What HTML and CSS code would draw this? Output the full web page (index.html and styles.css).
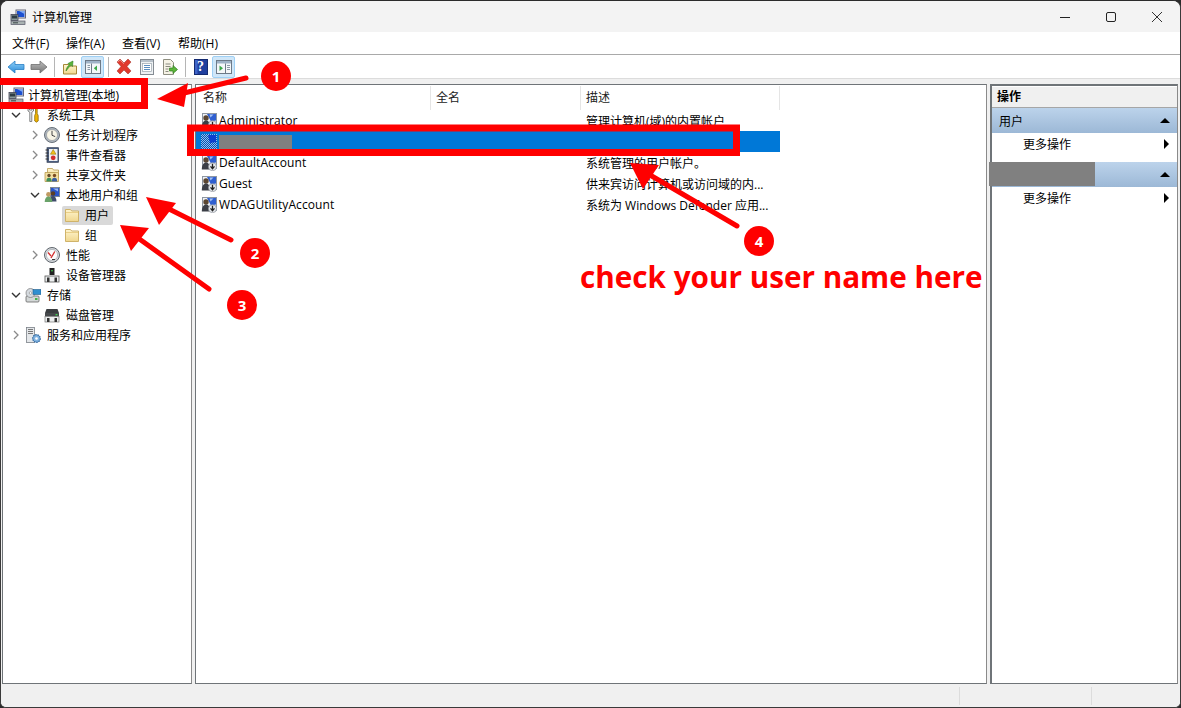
FILE: index.html
```html
<!DOCTYPE html>
<html lang="zh-CN">
<head>
<meta charset="utf-8">
<title>计算机管理</title>
<link rel="stylesheet" href="styles.css">
</head>
<body>
<svg class="defs" width="0" height="0" aria-hidden="true">
  <defs>
    <linearGradient id="gBlue" x1="0" y1="0" x2="0" y2="1"><stop offset="0" stop-color="#8fd0f8"/><stop offset="1" stop-color="#2a8ad8"/></linearGradient>
    <linearGradient id="gGray" x1="0" y1="0" x2="0" y2="1"><stop offset="0" stop-color="#bdbdbd"/><stop offset="1" stop-color="#767676"/></linearGradient>
    <linearGradient id="gFolder" x1="0" y1="0" x2="0" y2="1"><stop offset="0" stop-color="#fff5cf"/><stop offset="1" stop-color="#f0d78e"/></linearGradient>
    <symbol id="i-computer" viewBox="0 0 16 16">
      <rect x="6" y="1" width="9.500" height="8" fill="#e8eef5" stroke="#667" stroke-width="1"/>
      <rect x="7" y="2" width="7.500" height="6" fill="#1b4fd0"/>
      <path d="M9 2h5.500v3z" fill="#7fa8f0"/>
      <rect x="1" y="5.500" width="7" height="6" fill="#8a9a9a" stroke="#445" stroke-width=".8"/>
      <rect x="2" y="6.500" width="5" height="3" fill="#2e3c44"/>
      <rect x="1" y="12" width="14" height="3.500" fill="#a9b2b2" stroke="#556" stroke-width=".7"/>
      <rect x="3" y="13.300" width="5" height="1" fill="#3b4648"/>
    </symbol>
    <symbol id="i-user" viewBox="0 0 16 16">
      <rect x="1.500" y=".5" width="14" height="13" fill="#eef1f5" stroke="#8d96a2"/>
      <path d="M6 1h9v6.500L10 8.500z" fill="#2f5fd0"/>
      <path d="M8.500 1.500h4l-3 3z" fill="#a3c0f2"/>
      <circle cx="5" cy="5" r="2.700" fill="#5a4632"/>
      <path d="M.8 14.500c0-4.500 2-7 4.200-7s4 2 4 5v2z" fill="#3b3e46"/>
      <circle cx="11.500" cy="11.700" r="4" fill="#e6e9ed" stroke="#8f959c" stroke-width=".7"/>
      <path d="M11.500 8.800v4.700M9.500 11.400l2 2.300 2-2.300" fill="none" stroke="#222" stroke-width="1.300"/>
    </symbol>
    <symbol id="i-userSel" viewBox="0 0 16 16">
      <pattern id="pDots" width="2" height="2" patternUnits="userSpaceOnUse"><rect width="1" height="1" fill="#0a4fb0"/><rect x="1" y="1" width="1" height="1" fill="#0a4fb0"/><rect x="1" width="1" height="1" fill="#8cc2f0"/><rect y="1" width="1" height="1" fill="#8cc2f0"/></pattern>
      <rect x="0" y="0" width="16" height="16" fill="url(#pDots)"/>
      <path d="M7 1h8v7l-6 1z" fill="#0b3fd0"/>
    </symbol>
    <symbol id="i-folder" viewBox="0 0 16 16">
      <path d="M1.500 2.500h5l1.200 1.500h6.800v10.500h-13z" fill="url(#gFolder)" stroke="#cfb36a"/>
      <path d="M2 5.500h12" stroke="#e9cf88"/>
    </symbol>
    <symbol id="i-tools" viewBox="0 0 16 16">
      <path d="M3 .5v3.500l1.800 1.200v9.300h2V5.200L8.500 4V.5L7 .5v2.500H4.500V.5z" fill="#eceff1" stroke="#666" stroke-width=".8"/>
      <path d="M10.500 1.500h1.700v5l1 2v5.500l-1.800 1.200-1.700-1.200V8.500l.8-2z" fill="#f0b400" stroke="#7d5f00" stroke-width=".7"/>
    </symbol>
    <symbol id="i-clock" viewBox="0 0 16 16">
      <circle cx="8" cy="8" r="7.500" fill="#aeb6bf" stroke="#687078"/>
      <circle cx="8" cy="8" r="5.500" fill="#f8f5e6" stroke="#8a8f94" stroke-width=".6"/>
      <path d="M8 3.800v4.500l3.200 1.300" fill="none" stroke="#444" stroke-width="1"/>
    </symbol>
    <symbol id="i-event" viewBox="0 0 16 16">
      <rect x="3" y=".7" width="11.500" height="14.600" fill="#4c5f80" stroke="#2f3a50" stroke-width=".7"/>
      <rect x="5" y="2" width="8.500" height="12" fill="#eef1f4"/>
      <path d="M9.200 2.500l2.800 4.700H6.400z" fill="#f3c11a" stroke="#8a6a00" stroke-width=".5"/>
      <circle cx="9.200" cy="10.800" r="2.400" fill="#d32f2f"/>
      <path d="M1.500 3h3M1.500 6h3M1.500 9h3M1.500 12h3" stroke="#333"/>
    </symbol>
    <symbol id="i-share" viewBox="0 0 16 16">
      <path d="M3.500 1.500h5l1 1.500h5v8h-11z" fill="url(#gFolder)" stroke="#b89a50" stroke-width=".8"/>
      <path d="M1 5.500h13.500v9H1z" fill="#f3dfa0" stroke="#b89a50" stroke-width=".8"/>
      <circle cx="5" cy="8.500" r="1.700" fill="#6a5030"/>
      <path d="M2.300 14.500c0-2.800 1-3.800 2.700-3.800s2.700 1 2.700 3.800z" fill="#3f8f5a"/>
      <circle cx="10.500" cy="8.500" r="1.700" fill="#7a4a20"/>
      <path d="M7.800 14.500c0-2.800 1-3.800 2.700-3.800s2.700 1 2.700 3.800z" fill="#3b5fa0"/>
    </symbol>
    <symbol id="i-group" viewBox="0 0 16 16">
      <rect x="6.500" y=".5" width="9" height="9" fill="#2a55c8" stroke="#7d8794"/>
      <path d="M9 1.500h5v3z" fill="#9dbaf0"/>
      <circle cx="9" cy="6.500" r="2.300" fill="#5a3f26"/>
      <path d="M5.500 14.500c0-3.500 1.500-5.500 3.500-5.500s3.500 2 3.500 5.500z" fill="#3e4a6a"/>
      <circle cx="4.500" cy="7.500" r="2.400" fill="#c09a62"/>
      <path d="M.7 15c0-3.500 1.500-5.500 3.800-5.500S8.300 11.500 8.300 15z" fill="#6aa36a"/>
    </symbol>
    <symbol id="i-perf" viewBox="0 0 16 16">
      <circle cx="8" cy="8" r="7.500" fill="#d6dade" stroke="#5f656c"/>
      <circle cx="8" cy="8" r="5.600" fill="#fbfbfb" stroke="#9a9fa4" stroke-width=".6"/>
      <path d="M4 5.500l3 3.500M10.800 4.500L7 11" stroke="#d22c2c" stroke-width="1.300" fill="none"/>
      <path d="M8 12.500h3" stroke="#3a3a3a"/>
    </symbol>
    <symbol id="i-device" viewBox="0 0 16 16">
      <rect x="5.500" y="1" width="5" height="7" fill="#222"/>
      <rect x="7.300" y="3" width="1.400" height="1.400" fill="#3fd04c"/>
      <rect x="1" y="9" width="14" height="6" fill="#eceeef" stroke="#555" stroke-width=".8"/>
      <rect x="3" y="10.500" width="2.500" height="4.500" fill="#333"/>
      <rect x="10.500" y="10.500" width="2.500" height="4.500" fill="#333"/>
    </symbol>
    <symbol id="i-storage" viewBox="0 0 16 16">
      <rect x="1" y="9" width="13" height="6" rx="1" fill="#d4d8d8" stroke="#666" stroke-width=".8"/>
      <rect x="10" y="11" width="2.500" height="2" fill="#45b34a"/>
      <ellipse cx="5.500" cy="6" rx="4.500" ry="4.500" fill="#d6dbe0" stroke="#777" stroke-width=".7"/>
      <circle cx="5.500" cy="6" r="1.300" fill="#fff" stroke="#777" stroke-width=".5"/>
      <rect x="8" y="2.500" width="8" height="5" fill="#2f8fd0" stroke="#1e5a8a" stroke-width=".6"/>
    </symbol>
    <symbol id="i-disk" viewBox="0 0 16 16">
      <path d="M2.500 2h11l1.500 4H1z" fill="#3a3d40"/>
      <rect x="1" y="6" width="14" height="3.500" fill="#46494c"/>
      <rect x="11.500" y="7" width="2" height="1.300" fill="#40d050"/>
      <rect x="1" y="9.500" width="14" height="5.500" fill="#eceeef" stroke="#777" stroke-width=".7"/>
      <rect x="3" y="11" width="2.500" height="4" fill="#333"/>
      <rect x="10.500" y="11" width="2.500" height="4" fill="#333"/>
    </symbol>
    <symbol id="i-services" viewBox="0 0 16 16">
      <rect x="1.500" y="0.500" width="8" height="15" fill="#e4e7ea" stroke="#7a8088" stroke-width=".8"/>
      <path d="M3 2.500h5M3 4.500h5M3 6.500h5" stroke="#777"/>
      <circle cx="11.500" cy="11.500" r="3.800" fill="#7fb2e0" stroke="#2f659c" stroke-width="1.200" stroke-dasharray="1.500 .8"/>
      <circle cx="11.500" cy="11.500" r="1.300" fill="#fff"/>
    </symbol>
    <symbol id="i-back" viewBox="0 0 18 16">
      <path d="M1 8l7-6v3.500h9v5H8V14z" fill="url(#gBlue)" stroke="#2a7fc4" stroke-width=".8"/>
    </symbol>
    <symbol id="i-forward" viewBox="0 0 18 16">
      <path d="M17 8l-7-6v3.500H1v5h9V14z" fill="url(#gGray)" stroke="#707070" stroke-width=".8"/>
    </symbol>
    <symbol id="i-up" viewBox="0 0 16 16">
      <path d="M1.500 5.500h5l1 1.500h7v8h-13z" fill="url(#gFolder)" stroke="#a68838"/>
      <path d="M4 12c.5-3 1.500-5 3.500-6L6 4.500l5-2.500-.5 5.500L9 6.300C7.500 7.500 6 9.500 4 12z" fill="#5cb53a" stroke="#2e7d1c" stroke-width=".6"/>
    </symbol>
    <symbol id="i-tree" viewBox="0 0 16 16">
      <rect x=".5" y="1.500" width="15" height="13" fill="#f4f7f9" stroke="#6d7a88"/>
      <rect x="1" y="2" width="14" height="2.500" fill="#9fb3c7"/>
      <path d="M6.500 4.500v10" stroke="#6d7a88"/>
      <path d="M2.500 6.500h2.500M2.500 8.500h2.500M2.500 10.500h2.500" stroke="#8a98a6"/>
      <path d="M12 6.500v5.500L8.800 9.300z" fill="#3aa648"/>
    </symbol>
    <symbol id="i-delete" viewBox="0 0 18 18">
      <path d="M2 4l3-3 4 4 4-4 3 3-4 4.500 4 4.500-3 3-4-4-4 4-3-3 4-4.500z" fill="#e0392c" stroke="#9c2a20" stroke-width=".5"/>
      <path d="M3 4l2-2 4 4" fill="none" stroke="#f2a69e" stroke-width=".7"/>
    </symbol>
    <symbol id="i-props" viewBox="0 0 16 16">
      <rect x="1.500" y=".5" width="13" height="15" fill="#eef1f3" stroke="#858c93"/>
      <rect x="2" y="1" width="12" height="2" fill="#b7c1ca"/>
      <rect x="3.500" y="4.500" width="9" height="8" fill="#fff" stroke="#9aa5ae" stroke-width=".7"/>
      <path d="M5 6.500h6M5 8.500h6M5 10.500h6" stroke="#5a8dc0"/>
    </symbol>
    <symbol id="i-export" viewBox="0 0 18 16">
      <path d="M2.500.5h7l3 3v12h-10z" fill="#f6f3e6" stroke="#8e8e80"/>
      <path d="M4.500 5h5M4.500 7.500h5M4.500 10h3M4.500 12.500h3" stroke="#8a8a80"/>
      <path d="M8.500 9h3.500V6.500l4.500 4-4.500 4V12H8.500z" fill="#5cb53a" stroke="#2e7d1c" stroke-width=".7"/>
    </symbol>
    <symbol id="i-help" viewBox="0 0 16 16">
      <rect x="1.500" y=".5" width="13" height="15" fill="#1f3f9e" stroke="#142a70"/>
      <rect x="2" y="1" width="2.500" height="14" fill="#3f64c8"/>
    </symbol>
    <symbol id="i-action" viewBox="0 0 16 16">
      <rect x=".5" y="1.500" width="15" height="13" fill="#f4f7f9" stroke="#6d7a88"/>
      <rect x="1" y="2" width="14" height="2.500" fill="#9fb3c7"/>
      <path d="M9.500 4.500v10" stroke="#6d7a88"/>
      <path d="M11 6.500h3M11 8.500h3M11 10.500h3" stroke="#8a98a6"/>
      <path d="M3.500 6.500v5.500L7 9.300z" fill="#3aa648"/>
    </symbol>
    <symbol id="i-open" viewBox="0 0 10 10"><path d="M3 1l4 4-4 4" fill="none" stroke="#8a8a8a" stroke-width="1.300"/></symbol>
    <symbol id="i-shut" viewBox="0 0 10 10"><path d="M1 3l4 4 4-4" fill="none" stroke="#333" stroke-width="1.400"/></symbol>
  </defs>
</svg>

<div class="window">
  <header class="titlebar">
    <svg class="ico16"><use href="#i-computer"/></svg>
    <span class="title">计算机管理</span>
    <div class="controls">
      <svg class="ctl" viewBox="0 0 46 30"><path d="M18 15.500h10" stroke="#222"/></svg>
      <svg class="ctl" viewBox="0 0 46 30"><rect x="18.500" y="10.500" width="9" height="9" rx="1.500" fill="none" stroke="#222"/></svg>
      <svg class="ctl" viewBox="0 0 46 30"><path d="M18 10l10 10M28 10L18 20" stroke="#333" fill="none"/></svg>
    </div>
  </header>

  <nav class="menubar">
    <span class="menu-item">文件(F)</span>
    <span class="menu-item">操作(A)</span>
    <span class="menu-item">查看(V)</span>
    <span class="menu-item">帮助(H)</span>
  </nav>

  <div class="toolbar">
    <span class="tool"><svg class="ico-arrow"><use href="#i-back"/></svg></span>
    <span class="tool"><svg class="ico-arrow"><use href="#i-forward"/></svg></span>
    <span class="tool-sep"></span>
    <span class="tool"><svg class="ico16"><use href="#i-up"/></svg></span>
    <span class="tool tool-on"><svg class="ico16"><use href="#i-tree"/></svg></span>
    <span class="tool-sep"></span>
    <span class="tool"><svg class="ico18"><use href="#i-delete"/></svg></span>
    <span class="tool"><svg class="ico16"><use href="#i-props"/></svg></span>
    <span class="tool"><svg class="ico-arrow"><use href="#i-export"/></svg></span>
    <span class="tool-sep"></span>
    <span class="tool help"><svg class="ico16"><use href="#i-help"/></svg><span class="help-mark">?</span></span>
    <span class="tool tool-on"><svg class="ico16"><use href="#i-action"/></svg></span>
  </div>

  <main class="panes">
    <aside class="pane tree">
      <div class="node root"><svg class="ico16"><use href="#i-computer"/></svg><span class="label">计算机管理(本地)</span></div>
      <div class="node lv0"><svg class="twist"><use href="#i-shut"/></svg><svg class="ico16"><use href="#i-tools"/></svg><span class="label">系统工具</span></div>
      <div class="node lv1"><svg class="twist"><use href="#i-open"/></svg><svg class="ico16"><use href="#i-clock"/></svg><span class="label">任务计划程序</span></div>
      <div class="node lv1"><svg class="twist"><use href="#i-open"/></svg><svg class="ico16"><use href="#i-event"/></svg><span class="label">事件查看器</span></div>
      <div class="node lv1"><svg class="twist"><use href="#i-open"/></svg><svg class="ico16"><use href="#i-share"/></svg><span class="label">共享文件夹</span></div>
      <div class="node lv1"><svg class="twist"><use href="#i-shut"/></svg><svg class="ico16"><use href="#i-group"/></svg><span class="label">本地用户和组</span></div>
      <div class="node lv2"><span class="leaf-box current"><svg class="ico16"><use href="#i-folder"/></svg><span class="label">用户</span></span></div>
      <div class="node lv2"><span class="leaf-box"><svg class="ico16"><use href="#i-folder"/></svg><span class="label">组</span></span></div>
      <div class="node lv1"><svg class="twist"><use href="#i-open"/></svg><svg class="ico16"><use href="#i-perf"/></svg><span class="label">性能</span></div>
      <div class="node lv1 leaf"><svg class="ico16"><use href="#i-device"/></svg><span class="label">设备管理器</span></div>
      <div class="node lv0"><svg class="twist"><use href="#i-shut"/></svg><svg class="ico16"><use href="#i-storage"/></svg><span class="label">存储</span></div>
      <div class="node lv1 leaf"><svg class="ico16"><use href="#i-disk"/></svg><span class="label">磁盘管理</span></div>
      <div class="node lv0"><svg class="twist"><use href="#i-open"/></svg><svg class="ico16"><use href="#i-services"/></svg><span class="label">服务和应用程序</span></div>
    </aside>

    <section class="pane list">
      <div class="row head">
        <span class="col col-name">名称</span>
        <span class="col col-full">全名</span>
        <span class="col col-desc">描述</span>
      </div>
      <div class="row"><span class="col col-name"><svg class="ico16"><use href="#i-user"/></svg>Administrator</span><span class="col col-full"></span><span class="col col-desc">管理计算机(域)的内置帐户</span></div>
      <div class="row selected"><span class="col col-name"><svg class="ico16"><use href="#i-userSel"/></svg><span class="redact-name"></span></span><span class="col col-full"></span><span class="col col-desc"></span></div>
      <div class="row"><span class="col col-name"><svg class="ico16"><use href="#i-user"/></svg>DefaultAccount</span><span class="col col-full"></span><span class="col col-desc">系统管理的用户帐户。</span></div>
      <div class="row"><span class="col col-name"><svg class="ico16"><use href="#i-user"/></svg>Guest</span><span class="col col-full"></span><span class="col col-desc">供来宾访问计算机或访问域的内...</span></div>
      <div class="row"><span class="col col-name"><svg class="ico16"><use href="#i-user"/></svg>WDAGUtilityAccount</span><span class="col col-full"></span><span class="col col-desc">系统为 Windows Defender 应用...</span></div>
    </section>

    <aside class="pane actions">
      <div class="actions-title">操作</div>
      <div class="group"><span>用户</span><i class="tri-up"></i></div>
      <div class="action"><span>更多操作</span><i class="tri-right"></i></div>
      <div class="group"><span class="redact-group"></span><i class="tri-up"></i></div>
      <div class="action"><span>更多操作</span><i class="tri-right"></i></div>
    </aside>
  </main>

  <footer class="statusbar">
    <span class="status-cell status-main"></span>
    <span class="status-cell status-mid"></span>
    <span class="status-cell status-end"></span>
  </footer>
</div>

<svg class="marks" viewBox="0 0 1181 708" aria-hidden="true">
  <rect class="mark-box" x="-4" y="81.500" width="148.500" height="24"/>
  <rect class="mark-box" x="190.500" y="128" width="546" height="24.500"/>
  <path class="mark-line" d="M246 78L180 94"/>
  <path class="mark-head" d="M157 99L188 83L184 107z"/>
  <path class="mark-line" d="M231 240L165 207"/>
  <path class="mark-head" d="M146 197L176 203L159 225z"/>
  <path class="mark-line" d="M209 289L138 238"/>
  <path class="mark-head" d="M120 225L149 228L131 251z"/>
  <path class="mark-line" d="M737 226L650 175"/>
  <path class="mark-head" d="M630 163L659 165L643 189z"/>
  <circle class="mark-dot" cx="276" cy="76" r="15"/>
  <circle class="mark-dot" cx="255" cy="253" r="15"/>
  <circle class="mark-dot" cx="242" cy="305" r="15"/>
  <circle class="mark-dot" cx="759" cy="241" r="15"/>
</svg>
<span class="num n1">1</span>
<span class="num n2">2</span>
<span class="num n3">3</span>
<span class="num n4">4</span>
<span class="note">check your user name here</span>
</body>
</html>
```

FILE: styles.css
```css
* { box-sizing: border-box; }
html, body { margin: 0; height: 100%; }
body {
  position: relative;
  width: 1181px;
  height: 708px;
  overflow: hidden;
  background: #2b2b2b;
  font-family: "Open Sans", "Noto Sans CJK SC", sans-serif;
  font-size: 12px;
  color: #000;
}
.defs { position: absolute; }
svg { display: block; flex: none; }
.ico16 { width: 16px; height: 16px; }
.ico18 { width: 18px; height: 18px; }
.ico-arrow { width: 18px; height: 16px; }

.window {
  height: 708px;
  display: flex;
  flex-direction: column;
  background: #f0f0f0;
  border: 1px solid #3a3a3a;
  border-top-color: #2b2b2b;
  border-radius: 8px 8px 6px 6px;
  overflow: hidden;
}

.titlebar {
  height: 31px;
  background: #f3f3f3;
  display: flex;
  align-items: center;
  padding-left: 9px;
  flex: none;
}
.title { margin-left: 6px; }
.controls { margin-left: auto; display: flex; }
.ctl { width: 46px; height: 30px; }

.menubar {
  height: 23px;
  background: #fff;
  border-bottom: 1px solid #a9a9a9;
  display: flex;
  align-items: center;
  flex: none;
  padding-left: 11px;
  gap: 16px;
}
.menu-item { width: 40px; white-space: nowrap; }
.menu-item:first-child { width: 38px; }

.toolbar {
  height: 24px;
  background: #fff;
  display: flex;
  align-items: center;
  flex: none;
  padding-left: 3px;
  border-bottom: 1px solid #dcdcdc;
}
.tool {
  position: relative;
  width: 23px;
  height: 22px;
  display: flex;
  align-items: center;
  justify-content: center;
}
.tool-on { background: #cfe6f8; border: 1px solid #9ed0f5; border-radius: 2px; }
.tool-sep { width: 8px; height: 20px; display: flex; justify-content: center; }
.tool-sep::before { content: ""; width: 1px; background: #b5b5b5; }
.help-mark {
  position: absolute;
  inset: 0;
  text-align: center;
  color: #fff;
  font: bold 14px/22px "Liberation Serif", serif;
}

.panes {
  flex: 1;
  min-height: 0;
  display: flex;
  gap: 3px;
  padding: 5px 2px 1px 1px;
  background: #f0f0f0;
}
.pane {
  background: #fff;
  border: 1px solid #6f7478;
  border-right-color: #8a8a8a;
}

.tree { width: 190px; }
.node {
  height: 20px;
  display: flex;
  align-items: center;
  white-space: nowrap;
}
.label { margin-left: 6px; }
.twist { width: 10px; height: 10px; margin-right: 4px; }
.root { padding-left: 5px; }
.root .label { margin-left: 4px; }
.lv0 { padding-left: 8px; }
.lv1 { padding-left: 27px; }
.lv1.leaf { padding-left: 41px; }
.lv2 { padding-left: 59px; }
.leaf-box {
  display: flex;
  align-items: center;
  height: 19px;
  padding: 0 4px 0 2px;
  border-radius: 2px;
}
.leaf-box .label { margin-left: 5px; }
.current { background: #d9d9d9; }

.list { width: 792px; }
.row { display: flex; height: 21px; width: 584px; align-items: center; white-space: nowrap; }
.head { height: 25px; color: #222; }
.head .col { height: 24px; padding: 0 0 2px 5px; border-right: 1px solid #e5e5e5; }
.head .col-name { padding-left: 7px; }
.col { display: flex; align-items: center; overflow: hidden; }
.col-name { width: 235px; padding-left: 5px; letter-spacing: .08px; }
.col-name .ico16 { margin-right: 2px; }
.col-full { width: 150px; }
.col-desc { width: 199px; padding-left: 5px; }
.selected { background: #0078d7; }
.redact-name { width: 73px; height: 14px; background: #808080; }

.actions { flex: 1; border-top-width: 2px; border-left-width: 2px; }
.actions-title {
  height: 21px;
  margin-top: 1px;
  padding-left: 5px;
  line-height: 20px;
  font-weight: 700;
  background: #f0f0f0;
  border-bottom: 1px solid #a6a6a6;
}
.group {
  position: relative;
  height: 25px;
  display: flex;
  align-items: center;
  padding-left: 7px;
  background: linear-gradient(#bcd3eb, #9cb8d6);
}
.tri-up {
  margin-left: auto;
  margin-right: 7px;
  border: 5px solid transparent;
  border-top: 0;
  border-bottom: 5px solid #000;
}
.action {
  height: 29px;
  padding-left: 31px;
  padding-bottom: 7px;
  display: flex;
  align-items: center;
}
.tri-right {
  margin-left: auto;
  margin-right: 8px;
  border: 5px solid transparent;
  border-right: 0;
  border-left: 5px solid #000;
}
.redact-group {
  position: absolute;
  left: -3px;
  top: 0;
  width: 106px;
  height: 24px;
  background: #808080;
}

.statusbar { height: 22px; display: flex; flex: none; padding: 2px 0; background: #f0f0f0; }
.status-cell { border-right: 1px solid #dcdcdc; }
.status-main { width: 959px; }
.status-mid { width: 132px; }
.status-end { flex: 1; border-right: 0; }

.marks { position: absolute; left: 0; top: 0; width: 1181px; height: 708px; pointer-events: none; }
.mark-box { fill: none; stroke: #ff0000; stroke-width: 7; }
.mark-line { stroke: #ff0000; stroke-width: 5; stroke-linecap: round; fill: none; }
.mark-head { fill: #ff0000; }
.mark-dot { fill: #ff0000; }

.num {
  position: absolute;
  width: 30px;
  text-align: center;
  color: #fff;
  font: 700 15px/30px "Open Sans", sans-serif;
}
.n1 { left: 261px; top: 61px; }
.n2 { left: 240px; top: 238px; }
.n3 { left: 227px; top: 290px; }
.n4 { left: 744px; top: 226px; }
.note {
  position: absolute;
  left: 580px;
  top: 256px;
  color: #ff0000;
  font: 700 29.7px/42px "Open Sans", sans-serif;
  white-space: nowrap;
}
```
